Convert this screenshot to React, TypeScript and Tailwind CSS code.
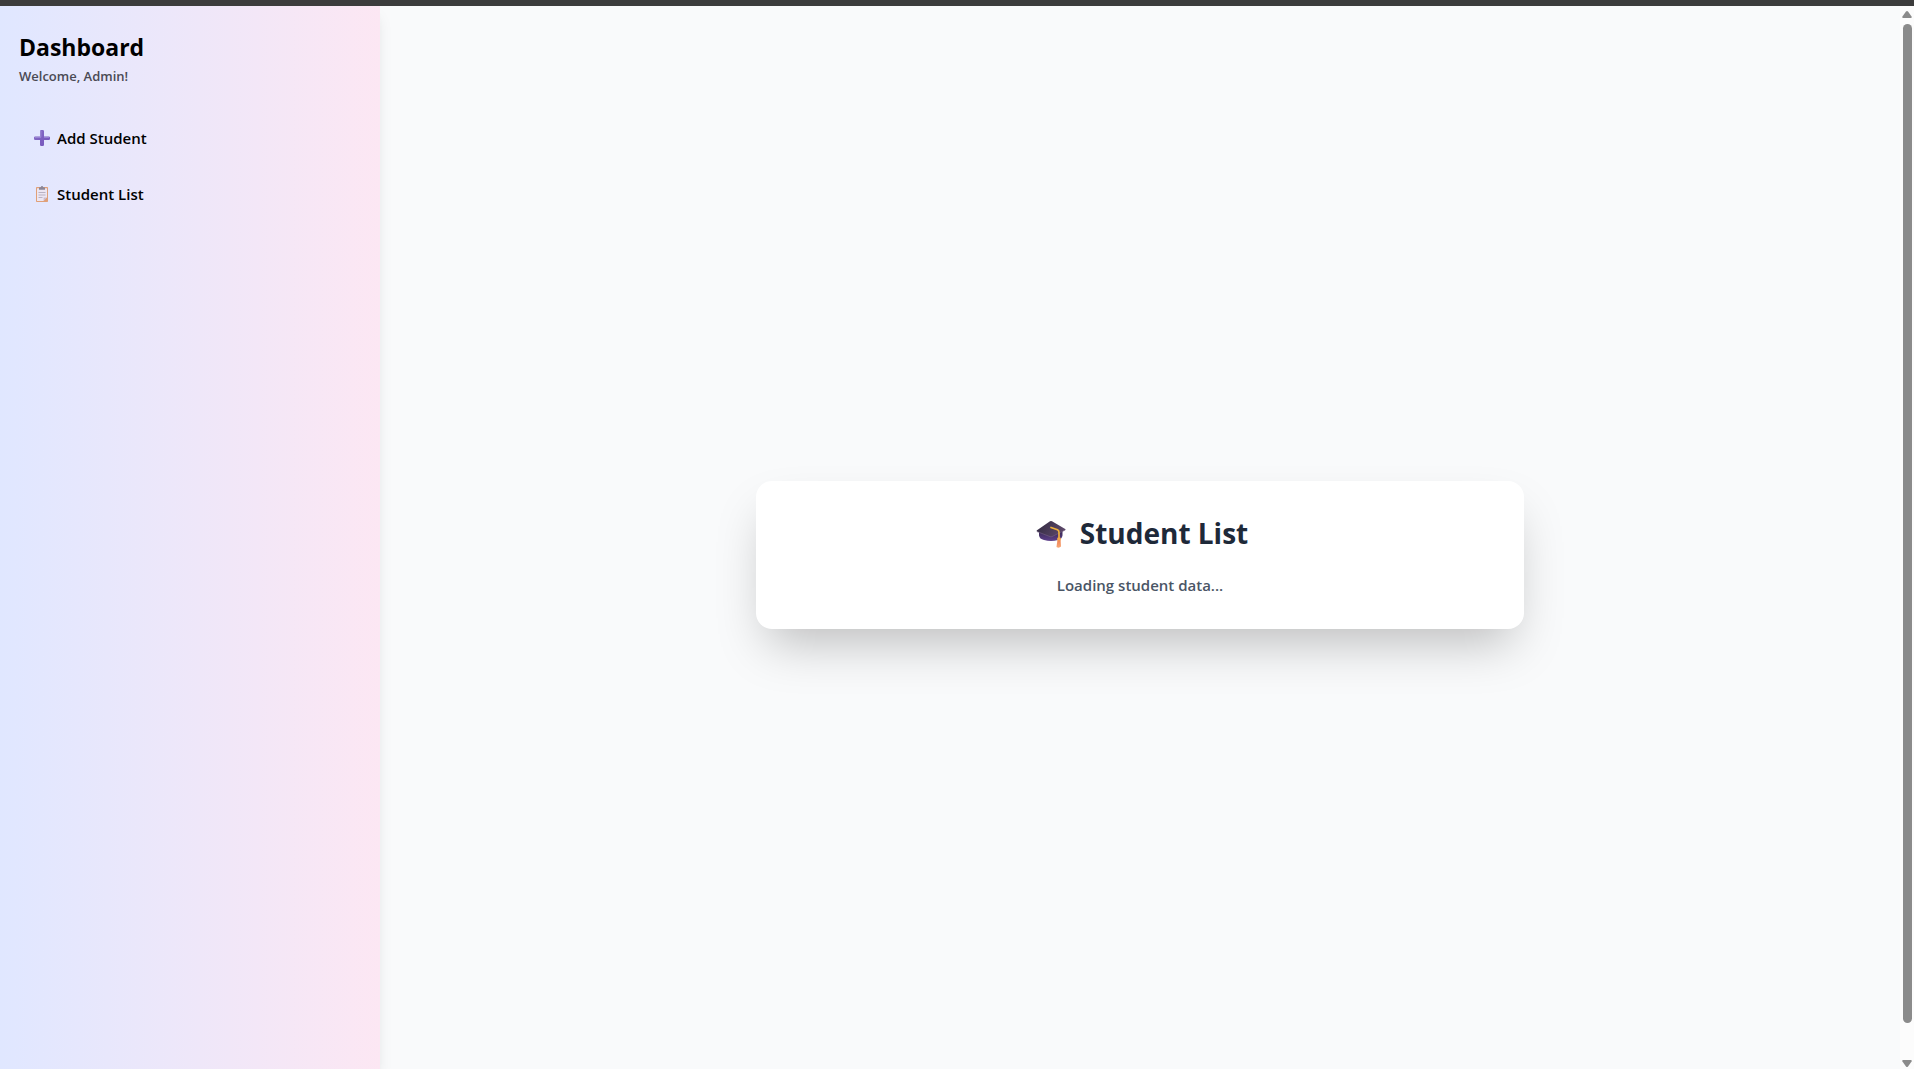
import React from "react";

function PlusIcon() {
  return (
    <svg viewBox="0 0 16 16" className="size-4 shrink-0" aria-hidden="true">
      <defs>
        <linearGradient id="plus" x1="0" y1="0" x2="1" y2="1">
          <stop offset="0" stopColor="#8a72c9" />
          <stop offset="0.5" stopColor="#7c5fc0" />
          <stop offset="1" stopColor="#7657bd" />
        </linearGradient>
      </defs>
      <path
        d="M7.200 0h1.600q1.200 0 1.200 1.200V6.500H14.800Q16 6.500 16 7.600V8.900Q16 10 14.800 10H10V14.800Q10 16 8.800 16H7.200Q6 16 6 14.800V10H1.200Q0 10 0 8.900V7.600Q0 6.500 1.200 6.500H6V1.200Q6 0 7.200 0Z"
        fill="url(#plus)"
      />
      <path d="M1 7.300h5.800V1M10 7.300h5" fill="none" stroke="#a797da" strokeWidth="0.8" />
    </svg>
  );
}

function ClipboardIcon() {
  return (
    <svg viewBox="0 0 16 16" className="size-4 shrink-0" aria-hidden="true">
      <rect x="2" y="1" width="12" height="15" rx="0.8" fill="#e0a078" />
      <path d="M3 2.200h10v9.300L9.600 15H3Z" fill="#ece6f2" />
      <path d="M13 11.500v3.500H9.600Z" fill="#e0a078" />
      <path d="M9.600 15v-3.500h3.400Z" fill="#c9bccf" />
      <path d="M5 3.800V2.200Q5 1.300 6 1.300H6.800Q7 0 8 0T9.200 1.300H10Q11 1.300 11 2.200V3.800Z" fill="#8b8798" />
      <path d="M4.500 6.500h7M4.500 9h7M4.500 11.500h4" stroke="#b9b2c4" strokeWidth="1" />
    </svg>
  );
}

function GraduationIcon() {
  return (
    <svg viewBox="-4 -2 34 30" className="h-[30px] w-[34px] shrink-0" aria-hidden="true">
      <defs>
        <linearGradient id="cap" x1="0" y1="0" x2="1" y2="0.3">
          <stop offset="0" stopColor="#312a40" />
          <stop offset="1" stopColor="#5b4768" />
        </linearGradient>
        <linearGradient id="bowl" x1="0" y1="0" x2="0" y2="1">
          <stop offset="0" stopColor="#33264b" />
          <stop offset="1" stopColor="#5e408b" />
        </linearGradient>
        <linearGradient id="tassel" x1="0" y1="0" x2="0" y2="1">
          <stop offset="0" stopColor="#ef8050" />
          <stop offset="1" stopColor="#f8a877" />
        </linearGradient>
      </defs>
      <path d="M3 11V15.500Q3.500 19 8 20Q15 21.800 22 20Q26 19 26.500 15.500V10Z" fill="url(#bowl)" />
      <path d="M14 1.300Q15 0.800 16 1.300L29.200 9Q30 9.600 29.200 10.100L16 16.600Q15 17.100 14 16.600L1 11.600Q0 11 1 10.300Z" fill="url(#cap)" />
      <path d="M1 11.600L14 16.600Q15 17.100 16 16.600L29.200 10.100" fill="none" stroke="#776186" strokeWidth="0.6" />
      <path d="M15 7.500L21.500 9.800Q23 10.500 23 12.500V18.500" fill="none" stroke="#efb03d" strokeWidth="1.700" strokeLinecap="round" />
      <path d="M21.500 19.500h3l0.500 7Q23 28.500 20.500 27Z" fill="url(#tassel)" />
      <rect x="21.200" y="17.500" width="3.600" height="3" rx="1" fill="#f0a64b" />
    </svg>
  );
}

const navItems = [
  { label: "Add Student", icon: <PlusIcon /> },
  { label: "Student List", icon: <ClipboardIcon /> },
];

function Sidebar() {
  return (
    <aside className="relative w-1/5 shrink-0 bg-linear-to-r from-indigo-100 to-pink-100 px-[19px] pt-6 shadow-lg">
      <h1 className="mb-0.5 text-[23px] leading-[34px] font-bold text-black">Dashboard</h1>
      <p className="text-[13px] leading-5 font-semibold text-[#4a4a54]">Welcome, Admin!</p>
      <nav className="mt-7 flex flex-col gap-2">
        {navItems.map((item) => (
          <button
            key={item.label}
            type="button"
            className="flex h-12 items-center gap-[7px] rounded-lg px-[15px] text-[15px] font-semibold text-black"
          >
            {item.icon}
            {item.label}
          </button>
        ))}
      </nav>
    </aside>
  );
}

function ScrollTrack() {
  return (
    <div className="flex w-3.5 shrink-0 flex-col items-center bg-[#fcfcfc] pt-[5px]" aria-hidden="true">
      <svg viewBox="0 0 10 7" className="h-[7px] w-2.5">
        <path d="M4 0.600Q5 -0.400 6 0.600L9.600 5.500Q10 7 9 7H1Q0 7 0.400 5.500Z" fill="#8b8b8b" />
      </svg>
      <div className="mt-1.5 mb-[37px] w-[9px] flex-1 rounded-full bg-[#8b8b8b]" />
      <svg viewBox="0 0 10 7" className="mb-0.5 h-[7px] w-2.5">
        <path d="M4 6.400Q5 7.400 6 6.400L9.600 1.500Q10 0 9 0H1Q0 0 0.400 1.500Z" fill="#8b8b8b" />
      </svg>
    </div>
  );
}

export default function App() {
  return (
    <div className="flex h-screen flex-col overflow-hidden bg-gray-50 font-['Open_Sans',sans-serif]">
      <div className="h-1.5 shrink-0 bg-[#3c3c3c]" />
      <div className="flex min-h-0 flex-1">
        <div className="flex min-w-0 flex-1 overflow-hidden">
          <Sidebar />
          <main className="flex h-[calc(100vh+29px)] min-w-0 flex-1 items-center justify-center">
            <section className="w-full max-w-3xl rounded-2xl bg-white p-8 text-center shadow-2xl">
              <h2 className="mb-5 flex items-center justify-center gap-3.5 text-[28px] leading-10 font-bold text-gray-800">
                <GraduationIcon />
                Student List
              </h2>
              <p className="text-[15px] leading-6 font-semibold text-gray-600">Loading student data...</p>
            </section>
          </main>
        </div>
        <ScrollTrack />
      </div>
    </div>
  );
}
